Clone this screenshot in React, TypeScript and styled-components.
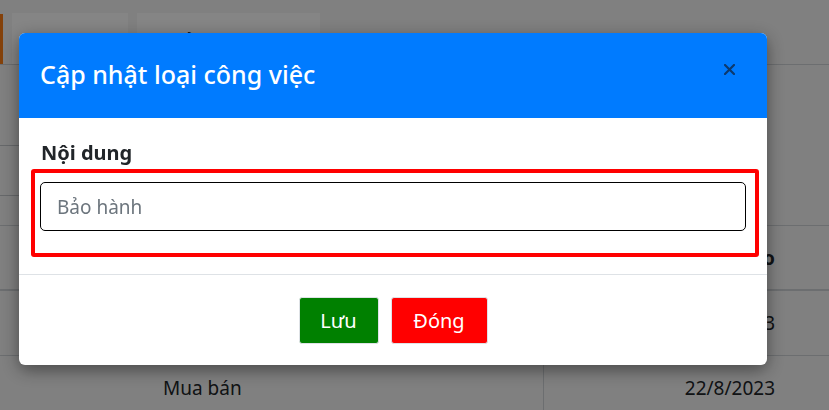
import React from 'react';
import styled, { createGlobalStyle } from 'styled-components';

const GlobalStyle = createGlobalStyle`
  html, body {
    margin: 0;
    padding: 0;
    font-family: 'Noto Sans', 'Open Sans', sans-serif;
    color: #212529;
  }
  * { box-sizing: border-box; }
`;

// --- background page ---
const Page = styled.div`
  position: relative;
  width: 100%;
  height: 410px;
  overflow: hidden;
  background: #f6f6f6;
`;

const TabBar = styled.div`
  display: flex;
  align-items: flex-start;
  gap: 9px;
  padding-top: 13px;
  height: 65px;
  border-bottom: 1px solid #cfd3d7;
`;

const OrangeEdge = styled.div`
  width: 3px;
  height: 50px;
  margin-top: 1px;
  background: #fd7e14;
`;

const Tab = styled.div<{ $w: number }>`
  width: ${(p) => p.$w}px;
  height: 51px;
  background: #ffffff;
  padding: 15px 0 0 22px;
  font-size: 18px;
  color: #212529;
  white-space: nowrap;
`;

const Filters = styled.div`
  height: 160px;
  padding-top: 80px;
`;

const SearchBox = styled.div`
  width: 320px;
  height: 51px;
  border-top: 1px solid #c4c8cc;
  border-bottom: 1px solid #c4c8cc;
`;

const Table = styled.div`
  border-top: 1px solid #cfd3d7;
`;

const Row = styled.div<{ $head?: boolean }>`
  display: grid;
  grid-template-columns: 100px 443px 1fr;
  height: 65px;
  align-items: center;
  font-size: 19px;
  font-weight: ${(p) => (p.$head ? 700 : 400)};
  border-bottom: ${(p) => (p.$head ? '2px' : '1px')} solid #cfd3d7;
`;

const Cell = styled.div<{ $align?: string; $divider?: boolean }>`
  height: 100%;
  display: flex;
  align-items: center;
  justify-content: ${(p) => p.$align || 'center'};
  padding-right: ${(p) => (p.$align === 'flex-end' ? '54px' : '0')};
  border-left: ${(p) => (p.$divider ? '1px solid #cfd3d7' : 'none')};
`;

const NameCell = styled(Cell)`
  justify-content: flex-start;
  padding-left: 63px;
`;

// --- modal ---
const Backdrop = styled.div`
  position: fixed;
  inset: 0;
  background: rgba(0, 0, 0, 0.48);
  display: flex;
  align-items: flex-start;
  padding: 33px 0 0 19px;
`;

const Modal = styled.div`
  width: 748px;
  background: #fff;
  border-radius: 6px;
  overflow: hidden;
  box-shadow: 0 5px 18px rgba(0, 0, 0, 0.45);
`;

const Header = styled.div`
  height: 85px;
  background: #007bff;
  display: flex;
  align-items: center;
  justify-content: space-between;
  padding: 0 28px 0 21px;
`;

const Title = styled.h5`
  margin: 0;
  font-size: 25px;
  font-weight: 500;
  color: #fff;
  padding-bottom: 3px;
`;

const CloseButton = styled.button`
  border: 0;
  background: transparent;
  padding: 4px;
  display: flex;
  cursor: pointer;
  margin-bottom: 12px;
`;

const Body = styled.div`
  padding: 23px 8px 17px 12px;
`;

const Label = styled.label`
  display: block;
  font-size: 20px;
  font-weight: 700;
  line-height: 24px;
  margin: 0 0 4px 10px;
  color: #212529;
`;

const Highlight = styled.div`
  border: 4px solid #ff0000;
  border-radius: 3px;
  padding: 9px 9px 22px 5px;
`;

const Input = styled.input`
  width: 100%;
  height: 49px;
  border: 1px solid #000;
  border-radius: 5px;
  padding: 0 16px;
  font-family: inherit;
  font-size: 19px;
  color: #212529;
  outline: none;
  &::placeholder {
    color: #6c757d;
  }
`;

const Footer = styled.div`
  border-top: 1px solid #dee2e6;
  padding: 22px 0 21px;
  display: flex;
  justify-content: center;
  gap: 12px;
`;

const Button = styled.button<{ $bg: string; $w: number }>`
  width: ${(p) => p.$w}px;
  height: 47px;
  background: ${(p) => p.$bg};
  color: #fff;
  border: 1px solid #dee2e6;
  border-radius: 3px;
  font-family: inherit;
  font-size: 20px;
  cursor: pointer;
`;

const CloseIcon = () => (
  <svg width="11" height="11" viewBox="0 0 11 11">
    <path d="M1 1 L10 10 M10 1 L1 10" stroke="#0d3a6e" strokeWidth="2.2" strokeLinecap="round" />
  </svg>
);

export default function App() {
  return (
    <>
      <GlobalStyle />
      <Page>
        <TabBar>
          <OrangeEdge />
          <Tab $w={116}>Tính toán</Tab>
          <Tab $w={183}>Quản lý công việc</Tab>
        </TabBar>
        <Filters>
          <SearchBox />
        </Filters>
        <Table>
          <Row $head>
            <Cell />
            <NameCell>Loại công việc</NameCell>
            <Cell $align="flex-end">Ngày tạo</Cell>
          </Row>
          <Row>
            <Cell />
            <NameCell>Bảo hành</NameCell>
            <Cell $align="flex-end" $divider>21/8/2023</Cell>
          </Row>
          <Row>
            <Cell />
            <NameCell>Mua bán</NameCell>
            <Cell $align="flex-end" $divider>22/8/2023</Cell>
          </Row>
        </Table>
      </Page>
      <Backdrop>
        <Modal>
          <Header>
            <Title>Cập nhật loại công việc</Title>
            <CloseButton aria-label="Đóng">
              <CloseIcon />
            </CloseButton>
          </Header>
          <Body>
            <Label htmlFor="noi-dung">Nội dung</Label>
            <Highlight>
              <Input id="noi-dung" placeholder="Bảo hành" />
            </Highlight>
          </Body>
          <Footer>
            <Button $bg="#008000" $w={80}>Lưu</Button>
            <Button $bg="#ff0000" $w={97}>Đóng</Button>
          </Footer>
        </Modal>
      </Backdrop>
    </>
  );
}
